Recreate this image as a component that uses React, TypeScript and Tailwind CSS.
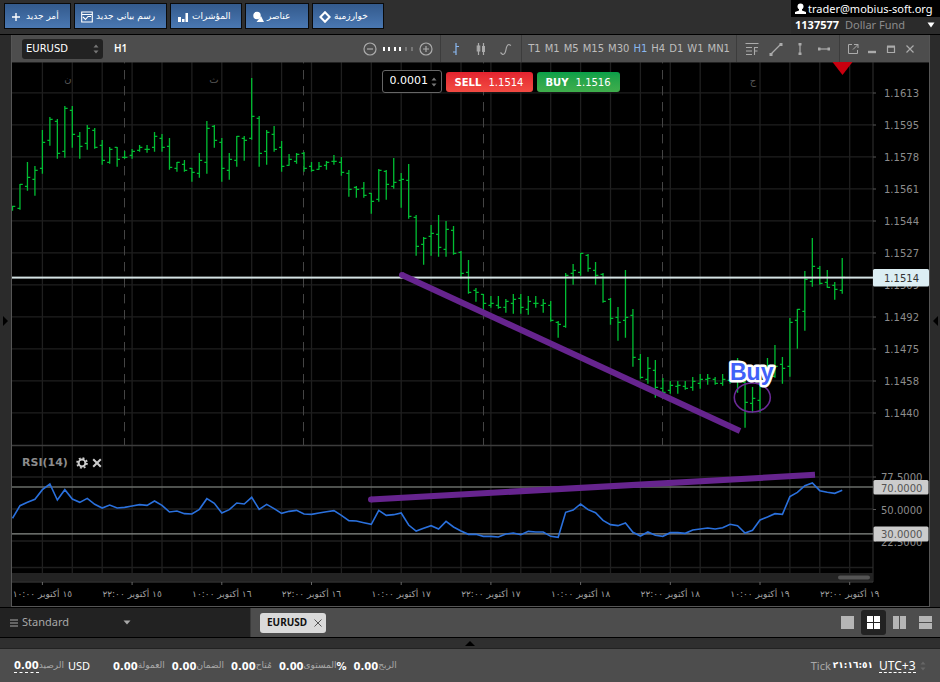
import { useState } from "react";
import type { ReactNode } from "react";
import clsx from "clsx";

// one entry per hour: high, open, low, close
const bars = [
  [206, 206, 210, 206], [184, 208, 209, 184], [162, 186, 190, 177], [166, 179, 195, 170],
  [130, 168, 173, 142], [117, 140, 145, 119], [119, 121, 158, 153], [106, 151, 157, 108],
  [106, 110, 147, 134], [132, 136, 158, 146], [125, 143, 149, 128], [128, 130, 148, 147],
  [140, 145, 164, 160], [147, 162, 163, 149], [147, 147, 166, 159], [151, 157, 158, 157],
  [149, 155, 158, 151], [145, 150, 151, 147], [145, 149, 152, 149], [132, 147, 151, 136],
  [134, 138, 151, 147], [138, 146, 169, 167], [162, 168, 171, 162], [160, 164, 171, 170],
  [168, 168, 181, 172], [153, 173, 177, 160], [121, 162, 173, 128], [125, 126, 147, 140],
  [138, 142, 181, 168], [153, 170, 179, 159], [136, 160, 166, 136], [136, 138, 160, 140],
  [78, 138, 139, 116], [116, 118, 166, 153], [130, 151, 164, 132], [126, 134, 151, 149],
  [141, 147, 171, 166], [154, 165, 165, 159], [153, 161, 163, 154], [152, 153, 171, 168],
  [162, 166, 171, 170], [162, 169, 169, 166], [161, 165, 169, 162], [155, 161, 164, 161],
  [157, 162, 175, 172], [170, 173, 196, 189], [186, 187, 197, 189], [182, 188, 197, 195],
  [193, 193, 213, 201], [169, 199, 201, 170], [170, 171, 199, 184], [158, 186, 188, 182],
  [173, 180, 207, 179], [164, 180, 218, 216], [215, 217, 255, 246], [237, 244, 264, 238],
  [225, 236, 255, 233], [215, 234, 256, 247], [221, 249, 256, 229], [226, 230, 254, 253],
  [251, 252, 278, 273], [260, 272, 293, 292], [288, 290, 301, 292], [294, 294, 311, 303],
  [296, 305, 307, 303], [296, 305, 308, 307], [299, 307, 312, 301], [294, 303, 313, 299],
  [294, 298, 313, 307], [296, 309, 314, 301], [296, 303, 307, 303], [299, 305, 312, 303],
  [301, 305, 321, 320], [321, 322, 337, 324], [273, 326, 327, 275], [264, 273, 284, 270],
  [253, 272, 275, 253], [254, 255, 271, 268], [262, 270, 284, 275], [273, 274, 302, 301],
  [298, 299, 324, 318], [307, 317, 340, 322], [270, 320, 337, 317], [309, 315, 366, 357],
  [354, 359, 378, 377], [357, 379, 383, 368], [360, 370, 397, 387], [378, 388, 393, 392],
  [381, 390, 393, 385], [381, 386, 393, 385], [381, 386, 389, 388], [377, 387, 390, 381],
  [374, 383, 388, 379], [374, 379, 384, 378], [377, 379, 384, 383], [374, 383, 385, 379],
  [375, 380, 383, 380], [358, 380, 392, 379], [380, 382, 427, 402], [387, 403, 412, 398],
  [383, 400, 412, 380], [358, 378, 385, 365], [345, 376, 377, 366], [357, 364, 383, 368],
  [318, 366, 376, 322], [309, 320, 348, 309], [271, 311, 330, 279], [238, 281, 286, 266],
  [266, 268, 284, 283], [270, 282, 287, 287], [282, 285, 299, 289], [258, 290, 293, 277],
];

const rsi = [
  235, 197, 187, 178, 149, 132, 180, 149, 177, 187, 175, 193, 204, 195, 204, 202, 198, 194, 196,
  183, 196, 216, 213, 221, 222, 208, 176, 190, 219, 209, 189, 192, 172, 208, 193, 206, 220, 214,
  211, 222, 223, 219, 215, 212, 226, 242, 243, 248, 253, 211, 226, 224, 219, 255, 273, 265, 257,
  267, 244, 261, 273, 283, 283, 289, 289, 291, 282, 279, 284, 274, 276, 276, 289, 292, 217, 210,
  192, 209, 218, 241, 254, 257, 249, 277, 288, 276, 286, 289, 278, 278, 280, 270, 267, 264, 267,
  263, 253, 257, 279, 271, 240, 231, 221, 223, 170, 157, 137, 129, 152, 157, 160, 151,
];

const prices = [
  "1.1613", "1.1595", "1.1578", "1.1561", "1.1544", "1.1527",
  "1.1509", "1.1492", "1.1475", "1.1458", "1.1440",
];

const dates = [
  "١٥ أكتوبر ١٠:٠٠", "١٥ أكتوبر ٢٢:٠٠", "١٦ أكتوبر ١٠:٠٠", "١٦ أكتوبر ٢٢:٠٠", "١٧ أكتوبر ١٠:٠٠",
  "١٧ أكتوبر ٢٢:٠٠", "١٨ أكتوبر ١٠:٠٠", "١٨ أكتوبر ٢٢:٠٠", "١٩ أكتوبر ١٠:٠٠", "١٩ أكتوبر ٢٢:٠٠",
];

const timeframes = ["T1", "M1", "M5", "M15", "M30", "H1", "H4", "D1", "W1", "MN1"];

const barX = (i: number) => 12.5 + i * 7.475;
const rsiY = (v: number) => 440 + v / 3;

function Chart() {
  const columns = Array.from({ length: 28 }, (_, i) => 42.4 + i * 29.9);

  return (
    <svg
      viewBox="12 62 917 544"
      className="block h-auto w-full bg-black font-['DejaVu_Sans',sans-serif] text-[10px]"
      role="img"
      aria-label="EURUSD H1"
    >
      <g stroke="#1f1f1f" strokeWidth="1.3">
        {columns.map((x) => (
          <line key={x} x1={x} x2={x} y1="62" y2="573" />
        ))}
        {prices.map((p, i) => (
          <line key={p} x1="12" x2="873" y1={92.8 + i * 32} y2={92.8 + i * 32} />
        ))}
        {[477, 509, 541, 567.5].map((y) => (
          <line key={y} x1="12" x2="873" y1={y} y2={y} />
        ))}
      </g>

      <g stroke="#444" strokeDasharray="9.4 6.6">
        {[124.5, 303.5, 483.5, 662.5].map((x) => (
          <line key={x} x1={x} x2={x} y1="54" y2="445" />
        ))}
      </g>

      <line x1="12" x2="873" y1="445.5" y2="445.5" stroke="#3c3c3c" strokeWidth="1.5" />
      <line x1="873" x2="873" y1="62" y2="582" stroke="#333" />
      <line x1="12" x2="929" y1="62" y2="62" stroke="#444" />

      <g fill="#555" fontSize="10" textAnchor="middle">
        <text x="68" y="82">ن</text>
        <text x="214" y="83">ث</text>
        <text x="753" y="84">ج</text>
      </g>

      <g stroke="#00bd32" strokeWidth="1.3">
        {bars.map(([high, open, low, close], i) => (
          <path
            key={i}
            fill="none"
            d={`M${barX(i)} ${high}V${low + 0.7}M${barX(i) - 2.5} ${open + 0.3}h2.5M${barX(i)} ${close + 0.3}h2.8`}
          />
        ))}
      </g>

      <rect x="12" y="276.6" width="861" height="2" fill="#d5e3e4" />

      {/* rsi levels and curve */}
      <line x1="12" x2="873" y1="487" y2="487" stroke="#686c68" strokeWidth="1.7" />
      <line x1="12" x2="873" y1="533.8" y2="533.8" stroke="#8a8e8a" strokeWidth="1.3" />
      <polyline
        points={rsi.map((v, i) => `${barX(i)},${rsiY(v)}`).join(" ")}
        fill="none"
        stroke="#2a70dc"
        strokeWidth="1.6"
      />

      {/* divergence drawings */}
      <g stroke="#66248e" strokeWidth="6">
        <line x1="402" y1="275" x2="740" y2="431" />
        <line x1="371" y1="499.5" x2="815" y2="474.8" />
      </g>
      <g fill="#66248e">
        <circle cx="402" cy="275" r="3" />
        <circle cx="371" cy="499.5" r="3" />
      </g>
      <ellipse cx="752.3" cy="397.5" rx="18" ry="14.5" fill="none" stroke="#6a2a96" strokeWidth="1.6" />
      <text
        x="730"
        y="380"
        fill="#4161f8"
        stroke="#fff"
        strokeWidth="5"
        strokeLinejoin="round"
        className="font-['Liberation_Sans',sans-serif] text-[23px] font-bold [paint-order:stroke]"
      >
        Buy
      </text>
      <path d="M832.5 62h20l-10 13z" fill="#c9000f" />

      {/* price axis */}
      {prices.map((p, i) => (
        <g key={p}>
          <line x1="873" x2="876" y1={93 + i * 32} y2={93 + i * 32} stroke="#555" />
          <text x="884" y={97 + i * 32} fill="#8c8c8c">{p}</text>
        </g>
      ))}
      <path d="M873 477h3M873 509.5h3M873 541h3" stroke="#555" />
      <g fill="#8c8c8c">
        <text x="881" y="481">77.5000</text>
        <text x="881" y="514">50.0000</text>
        <text x="881" y="546">22.5000</text>
      </g>
      <rect x="873" y="269" width="56" height="17.5" rx="1.5" fill="#dceef3" />
      <text x="884" y="281.5" fill="#333">1.1514</text>
      <rect x="873.5" y="480" width="55" height="14.5" rx="1.5" fill="#ccc" />
      <text x="881" y="491.5" fill="#555">70.0000</text>
      <rect x="873.5" y="526.5" width="55" height="15" rx="1.5" fill="#ccc" />
      <text x="881" y="538" fill="#555">30.0000</text>

      {/* scroll strip and time axis */}
      <rect x="12" y="573" width="861" height="8.5" fill="#232323" />
      <rect x="838" y="575.5" width="32" height="4" rx="2" fill="#555" />
      <line x1="12" x2="873" y1="582" y2="582" stroke="#444" />
      {dates.map((d, i) => (
        <g key={d}>
          <line x1={42.4 + i * 89.7} x2={42.4 + i * 89.7} y1="582" y2="585" stroke="#666" />
          <text
            x={42.4 + i * 89.7}
            y="597"
            direction="rtl"
            textAnchor="middle"
            fill="#a0a0a0"
            className="text-[9px]"
          >
            {d}
          </text>
        </g>
      ))}
    </svg>
  );
}

function Spinner({ className }: { className?: string }) {
  return (
    <svg viewBox="0 0 6 10" className={clsx("h-[10px] w-[6px] shrink-0", className)} fill="currentColor">
      <path d="M0.5 3.5L3 0.5l2.5 3zM0.5 6.5L3 9.5l2.5-3z" />
    </svg>
  );
}

function TopButton({ icon, label, className }: { icon: ReactNode; label: string; className: string }) {
  return (
    <button
      className={clsx(
        "flex h-[26px] items-center gap-[3px] border border-[#0a0a0a] bg-linear-to-b from-[#335a8d] to-[#4a78b2] pt-px pl-[6px] font-['DejaVu_Sans',sans-serif] text-[9px] whitespace-nowrap text-white",
        className
      )}
    >
      <svg viewBox="0 0 12 12" className="size-3 shrink-0" fill="none" stroke="#fff" strokeWidth="1.4">
        {icon}
      </svg>
      <span dir="rtl">{label}</span>
    </button>
  );
}

function Tool({ label, active, children }: { label: string; active?: boolean; children: ReactNode }) {
  return (
    <button aria-label={label} className={active ? "text-[#8ab8f0]" : "text-[#ababab]"}>
      <svg viewBox="0 0 14 14" className="size-[14px]" fill="none" stroke="currentColor" strokeWidth="1.2">
        {children}
      </svg>
    </button>
  );
}

function Stat({ label, suffix }: { label: string; suffix?: string }) {
  return (
    <div className="flex items-center whitespace-nowrap">
      <b className="text-white">0.00</b>
      <span dir="rtl" className="text-[9px] text-[#a8a8a8]">{label}</span>
      {suffix && <b className="text-white">{suffix}</b>}
    </div>
  );
}

function App() {
  const [frame, setFrame] = useState<string>("H1");
  const [volume, setVolume] = useState<string>("0.0001");

  return (
    <div dir="ltr" className="min-h-screen bg-[#4d4d4d] font-['DejaVu_Sans',sans-serif] text-[10px]">
      <header className="flex h-[35px] justify-between border-b border-black bg-[#2f2f2f]">
        <div className="flex gap-[3px] pt-[3px] pl-1">
          <TopButton className="w-[67px]" label="أمر جديد" icon={<path d="M5 2v8M1 6h8" />} />
          <TopButton
            className="w-[93px]"
            label="رسم بياني جديد"
            icon={<path d="M0.7 1h10.6v10H0.7zM0.7 3.5h10.6M2 6l2.5 2.5L7 5.5h3" strokeWidth="1.1" />}
          />
          <TopButton
            className="w-[72px]"
            label="المؤشرات"
            icon={<path d="M1 6h3v5H1zM5 8h2.5v3H5zM8.5 2H11v9H8.5z" fill="#fff" stroke="none" />}
          />
          <TopButton
            className="w-[64px]"
            label="عناصر"
            icon={
              <g fill="#fff" stroke="none">
                <circle cx="5" cy="4.5" r="3.7" />
                <path d="M9 5l3 6H4.5l2-2.5z" />
              </g>
            }
          />
          <TopButton
            className="w-[72px]"
            label="خوارزمية"
            icon={<path d="M6 1.2L10.6 6 6 10.8 1.4 6z" strokeWidth="2" />}
          />
        </div>
        <div className="w-[149px] bg-[#2b2b2b] font-['Noto_Sans',sans-serif] text-[11px] leading-4">
          <div className="flex h-[17px] items-center gap-[2px] bg-black pl-1 text-white">
            <svg viewBox="0 0 11 12" className="h-3 w-[11px] shrink-0" fill="#fff">
              <circle cx="5.5" cy="3.5" r="3" />
              <path d="M4 6h3v1.5l4 1.5v2H0V9l4-1.5z" />
            </svg>
            <span>trader@mobius-soft.org</span>
          </div>
          <button className="flex w-full items-center pr-[5px] pl-1">
            <b className="text-white">1137577</b>
            <span className="ml-[6px] text-[#8c8c8c]">Dollar Fund</span>
            <svg viewBox="0 0 8 6" className="ml-auto h-[6px] w-2" fill="#fff">
              <path d="M0.5 0.5h7L4 5.5z" />
            </svg>
          </button>
        </div>
      </header>

      <main className="flex border-b border-black bg-[#2b2b2b]">
        <button aria-label="Left panel" className="flex w-[11px] shrink-0 items-center justify-center">
          <svg viewBox="0 0 5 10" className="h-[10px] w-[5px]">
            <path d="M0 0v10l5-5z" />
          </svg>
        </button>

        <section className="min-w-0 flex-1 border-x border-b border-[#555]">
          <div className="flex h-[27px] items-center bg-[#4d4d4d]">
            <label className="relative ml-[10px] flex h-5 w-[81px] items-center rounded-[3px] bg-[#222] text-[#777]">
              <select
                aria-label="Symbol"
                className="w-full appearance-none bg-transparent pl-1 text-white outline-none"
              >
                <option>EURUSD</option>
              </select>
              <Spinner className="pointer-events-none absolute right-1" />
            </label>
            <span className="ml-[11px] text-[10px] font-semibold text-white font-['Noto_Sans',sans-serif]">
              H1
            </span>

            <div className="ml-auto flex h-full items-center">
              <div className="flex h-full items-center gap-[6px] border-r border-[#3c3c3c] pr-[7px]">
                <Tool label="Zoom out">
                  <circle cx="7" cy="7" r="6" />
                  <path d="M4 7h6" />
                </Tool>
                <svg viewBox="0 0 30 4" className="h-1 w-[30px]" fill="#fff">
                  <path d="M0 0h2v4H0zM5 0h2v4H5zM11 0h2v4h-2zM16 0h2v4h-2z" />
                  <path d="M22 0h2v4h-2zM28 0h2v4h-2z" fill="#777" />
                </svg>
                <Tool label="Zoom in">
                  <circle cx="7" cy="7" r="6" />
                  <path d="M4 7h6M7 4v6" />
                </Tool>
              </div>
              <div className="flex h-full items-center gap-[11px] border-r border-[#3c3c3c] px-2">
                <Tool label="Bars" active>
                  <path d="M7 1v12M7 4.5h3M4 10h3" />
                </Tool>
                <Tool label="Candles">
                  <path d="M4.5 1v12M9.5 1v12" />
                  <path d="M3.3 4h2.4v5H3.3z" />
                  <path d="M8 4h3v6H8z" fill="currentColor" stroke="none" />
                </Tool>
                <Tool label="Line">
                  <path d="M1.5 10.5l2 2c2 0 3-2 3.5-5s1.500-5 3-5l2 1" />
                </Tool>
              </div>
              <div className="flex h-full items-center gap-1 border-r border-[#3c3c3c] px-[6px]">
                {timeframes.map((t) => (
                  <button
                    key={t}
                    className={t === frame ? "text-[#8ab8f0]" : "text-[#bdbdbd]"}
                    onClick={() => setFrame(t)}
                  >
                    {t}
                  </button>
                ))}
              </div>
              <div className="flex h-full items-center gap-[10px] border-r border-[#3c3c3c] px-2">
                <Tool label="Fibonacci">
                  <path d="M0.5 1.5h13M1 5.5h6M1 12.500h6M1 9h6M9.500 13V5.500H13M9.500 9h3" strokeWidth="1.1" />
                </Tool>
                <Tool label="Trend line">
                  <path d="M2 12L12 2" />
                  <path d="M0.5 11h3v3h-3zM10.5 1h3v3h-3z" fill="currentColor" stroke="none" />
                </Tool>
                <Tool label="Vertical line">
                  <path d="M7 2v10" />
                  <path d="M5.5 1h3v2.5h-3zM5.5 10.5h3V13h-3z" fill="currentColor" stroke="none" />
                </Tool>
                <Tool label="Horizontal line">
                  <path d="M2 7h10" />
                  <path d="M1 5.5h2.5v3H1zM10.5 5.5H13v3h-2.5z" fill="currentColor" stroke="none" />
                </Tool>
              </div>
              <div className="flex h-full items-center gap-[5px] pr-3 pl-[6px]">
                <Tool label="Detach">
                  <path d="M6 2.5H2.5v9h9V8M8 2.5h4V6M12 2.5l-5 5" strokeWidth="1" />
                </Tool>
                <Tool label="Minimize">
                  <path d="M3 10h8" strokeWidth="2.4" />
                </Tool>
                <Tool label="Maximize">
                  <path d="M3.5 5h7v5.5h-7z" />
                  <path d="M3 4.5h8" strokeWidth="2" />
                </Tool>
                <Tool label="Close">
                  <path d="M3.5 3.5l7 7M10.5 3.5l-7 7" />
                </Tool>
              </div>
            </div>
          </div>

          <div className="relative">
            <Chart />
            <div className="absolute inset-x-0 top-2 flex justify-center gap-1 pl-[60px] text-[11px] text-white">
              <label className="flex h-[23px] w-[60px] items-center rounded-[3px] border border-[#666] bg-black pr-1 pl-[7px] text-[#777]">
                <input
                  aria-label="Volume"
                  className="w-full min-w-0 bg-transparent text-white outline-none"
                  value={volume}
                  onChange={(e: React.ChangeEvent<HTMLInputElement>) => setVolume(e.target.value)}
                />
                <Spinner />
              </label>
              <button className="mt-[2px] h-5 w-[87px] rounded-[3px] bg-linear-to-b from-[#e3222f] to-[#f24a42] text-[10px]">
                <b className="mr-1">SELL</b> 1.1514
              </button>
              <button className="mt-[2px] h-5 w-[83px] rounded-[3px] bg-linear-to-b from-[#07a049] to-[#3fae4c] text-[10px]">
                <b className="mr-1">BUY</b> 1.1516
              </button>
            </div>
            <div className="absolute top-[393px] left-[10px] flex items-center gap-1 text-[11px] font-bold text-[#8c8c8c]">
              <span className="mr-1">RSI(14)</span>
              <button aria-label="RSI settings">
                <svg viewBox="0 0 12 12" className="size-3" fill="none" stroke="#ccc">
                  <circle cx="6" cy="6" r="3.4" strokeWidth="2" />
                  <circle cx="6" cy="6" r="4.9" strokeWidth="1.8" strokeDasharray="1.9 1.95" />
                </svg>
              </button>
              <button aria-label="Remove RSI">
                <svg viewBox="0 0 10 10" className="size-[10px]" stroke="#ccc" strokeWidth="2">
                  <path d="M1.2 1.2l7.6 7.6M8.8 1.2L1.2 8.8" />
                </svg>
              </button>
            </div>
          </div>
        </section>

        <button aria-label="Right panel" className="flex w-[10px] shrink-0 items-center justify-end pr-[2px]">
          <svg viewBox="0 0 5 10" className="h-[10px] w-[5px]">
            <path d="M5 0v10L0 5z" />
          </svg>
        </button>
      </main>

      <nav className="flex h-[30px] border-b border-black">
        <label className="relative flex w-[251px] items-center border-r border-[#3a3a3a] bg-[#222] pl-[10px] text-[#a8a8a8]">
          <svg viewBox="0 0 8 8" className="size-2" stroke="currentColor">
            <path d="M0 1h8M0 4h8M0 7h8" />
          </svg>
          <select
            aria-label="Layout"
            className="ml-1 w-[110px] appearance-none bg-transparent font-['Noto_Sans',sans-serif] text-[11px] outline-none"
          >
            <option>Standard</option>
          </select>
          <svg viewBox="0 0 8 5" className="pointer-events-none absolute left-[123px] h-[5px] w-2" fill="currentColor">
            <path d="M0.5 0.5h7L4 4.5z" />
          </svg>
        </label>
        <div className="flex flex-1 items-center">
          <div className="ml-[9px] flex h-5 w-[66px] items-center justify-between rounded-[3px] bg-[#dadada] pr-1 pl-[7px]">
            <span className="font-['Noto_Sans',sans-serif] text-[10px] font-bold text-[#111]">EURUSD</span>
            <button aria-label="Close EURUSD">
              <svg viewBox="0 0 8 8" className="size-2" stroke="#555">
                <path d="M0.5 0.5l7 7M7.5 0.5l-7 7" />
              </svg>
            </button>
          </div>
          <div className="ml-auto flex items-center gap-px pr-[2px] text-[#b5b5b5]">
            <button aria-label="Single" className="flex size-[25px] items-center justify-center">
              <svg viewBox="0 0 13 13" className="size-[13px]" fill="currentColor">
                <path d="M0 0h13v13H0z" />
              </svg>
            </button>
            <button aria-label="Grid" className="flex size-[25px] items-center justify-center rounded-[3px] bg-[#222] text-white">
              <svg viewBox="0 0 13 13" className="size-[13px]" fill="currentColor">
                <path d="M0 0h6v6H0zM7 0h6v6H7zM0 7h6v6H0zM7 7h6v6H7z" />
              </svg>
            </button>
            <button aria-label="Columns" className="flex size-[25px] items-center justify-center">
              <svg viewBox="0 0 13 13" className="size-[13px]" fill="currentColor">
                <path d="M0 0h6v13H0zM7 0h6v13H7z" />
              </svg>
            </button>
            <button aria-label="Rows" className="flex size-[25px] items-center justify-center">
              <svg viewBox="0 0 13 13" className="size-[13px]" fill="currentColor">
                <path d="M0 0h13v6H0zM0 7h13v6H0z" />
              </svg>
            </button>
          </div>
        </div>
      </nav>

      <button
        aria-label="Bottom panel"
        className="flex h-[11px] w-full items-center justify-center border-b border-[#222] bg-[#2f2f2f]"
      >
        <svg viewBox="0 0 10 5" className="h-[5px] w-[10px]">
          <path d="M0 5h10L5 0z" />
        </svg>
      </button>

      <footer className="flex h-[34px] items-center justify-between bg-[#4d4d4d] pr-[14px] pl-[14px]">
        <div className="flex items-center gap-[7px]">
          <div className="mr-4 flex items-center">
            <b className="border-b border-dashed border-white leading-3 text-white">0.00</b>
            <span dir="rtl" className="text-[9px] text-[#a8a8a8]">الرصيد</span>
            <span className="ml-1 font-['Noto_Sans',sans-serif] text-[11px] text-white">USD</span>
          </div>
          <Stat label="العمولة" />
          <Stat label="الضمان" />
          <Stat label="مُتاح" />
          <Stat label="المستوى" suffix="%" />
          <Stat label="الربح" />
        </div>
        <div className="flex items-center font-['Noto_Sans',sans-serif] text-[11px] text-[#a8a8a8]">
          <span>Tick</span>
          <b className="ml-[2px] font-['DejaVu_Sans',sans-serif] text-[9px] text-white">٢١:١٦:٥١</b>
          <select
            aria-label="Time zone"
            className="ml-[6px] appearance-none border-b border-dashed border-white bg-transparent text-[12px] leading-3 text-white outline-none"
          >
            <option>UTC+3</option>
          </select>
          <Spinner className="ml-1 text-[#666]" />
        </div>
      </footer>
    </div>
  );
}

export default App;
